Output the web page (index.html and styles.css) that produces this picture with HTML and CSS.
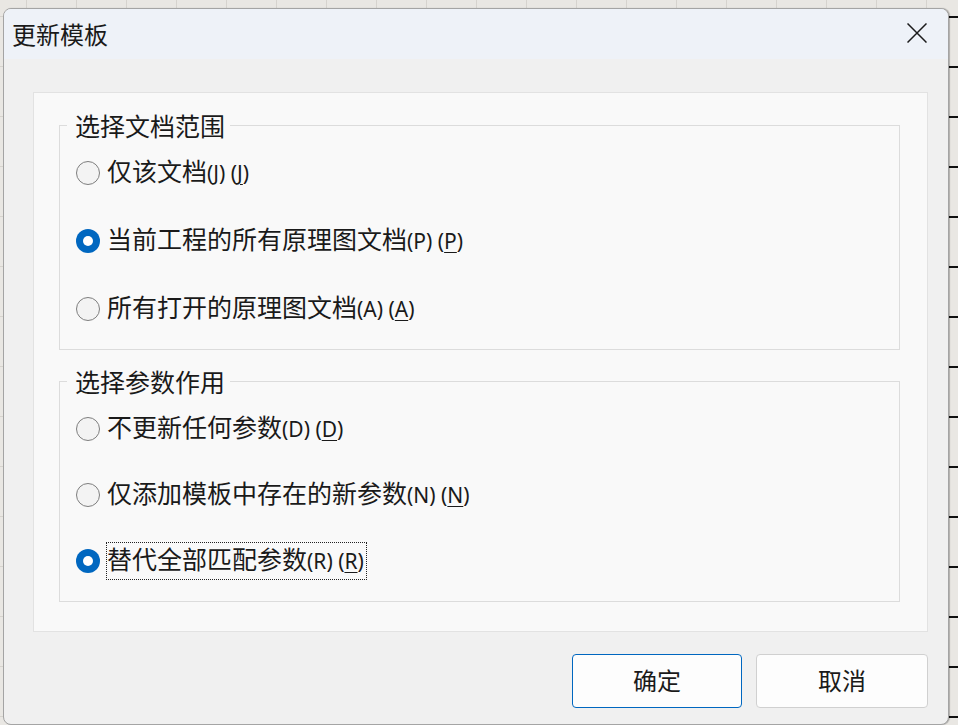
FILE: index.html
```html
<!DOCTYPE html>
<html lang="zh-CN">
<head>
<meta charset="utf-8">
<title>更新模板</title>
<link rel="stylesheet" href="styles.css">
</head>
<body>
<div class="dialog">
  <div class="titlebar">
    <span class="title">更新模板</span>
    <span class="close" aria-label="关闭">
      <svg width="20" height="20" viewBox="0 0 20 20"><path d="M0.5 0.5 L19.5 19.5 M19.5 0.5 L0.5 19.5" stroke="#1b1b1b" stroke-width="1.5" fill="none"/></svg>
    </span>
  </div>
  <div class="content">
    <div class="panel">
      <fieldset class="group g1">
        <legend>选择文档范围</legend>
        <div class="options">
          <label class="option"><span class="radio"></span><span class="text">仅该文档<span class="key">(J) (<u>J</u>)</span></span></label>
          <label class="option"><span class="radio checked"></span><span class="text">当前工程的所有原理图文档<span class="key">(P) (<u>P</u>)</span></span></label>
          <label class="option"><span class="radio"></span><span class="text">所有打开的原理图文档<span class="key">(A) (<u>A</u>)</span></span></label>
        </div>
      </fieldset>
      <fieldset class="group g2">
        <legend>选择参数作用</legend>
        <div class="options">
          <label class="option"><span class="radio"></span><span class="text">不更新任何参数<span class="key">(D) (<u>D</u>)</span></span></label>
          <label class="option"><span class="radio"></span><span class="text">仅添加模板中存在的新参数<span class="key">(N) (<u>N</u>)</span></span></label>
          <label class="option"><span class="radio checked"></span><span class="text focus">替代全部匹配参数<span class="key">(R) (<u>R</u>)</span></span></label>
        </div>
      </fieldset>
    </div>
    <div class="buttons">
      <button class="btn primary">确定</button>
      <button class="btn cancel">取消</button>
    </div>
  </div>
</div>
</body>
</html>
```

FILE: styles.css
```css
html, body {
  margin: 0;
  padding: 0;
}

body {
  width: 958px;
  height: 725px;
  overflow: hidden;
  box-sizing: border-box;
  padding: 8px 0 0 3px;
  font-family: "Noto Sans CJK SC", "Noto Sans", sans-serif;
  color: #1a1a1a;
  background-color: #e9e7e3;
  background-image:
    linear-gradient(to bottom, #111 2px, transparent 2px),
    linear-gradient(to right, #d6d3ce 1px, transparent 1px),
    linear-gradient(to bottom, #d6d3ce 1px, transparent 1px);
  background-size: 10px 50px, 50px 50px, 50px 50px;
  background-position: 949px 16px, 26px 0, 0 16px;
  background-repeat: repeat-y, repeat, repeat;
}

.dialog {
  width: 946px;
  height: 717px;
  box-sizing: border-box;
  border: 1px solid #a4a4a4;
  border-radius: 8px;
  background: #f0f0f0;
  overflow: hidden;
  display: flex;
  flex-direction: column;
  box-shadow: 1px 0 1px rgba(0, 0, 0, 0.25);
}

.titlebar {
  height: 50px;
  flex: none;
  background: #eef2f8;
  display: flex;
  align-items: center;
  justify-content: space-between;
  padding: 0 21px 0 8px;
}

.title {
  font-size: 24px;
  line-height: 30px;
}

.close {
  display: flex;
  width: 20px;
  height: 20px;
  margin-top: -3px;
}

.content {
  padding: 33px 20px 0 29px;
}

.panel {
  border: 1px solid #e2e2e2;
  background: #f9f9f9;
  padding: 17px 27px 29px 25px;
}

.group {
  margin: 0;
  border: 1px solid #dcdcdc;
  padding: 0 0 0 7px;
  min-width: 0;
}

.group + .group {
  margin-top: 16px;
}

.group legend {
  font-size: 25px;
  line-height: 30px;
  padding: 0 5px 0 8px;
}

.g1 {
  padding-top: 16px;
  padding-bottom: 23px;
}

.g2 {
  padding-top: 16px;
  padding-bottom: 23px;
}

.options {
  display: flex;
  flex-direction: column;
  margin-left: 9px;
}

.g1 .options {
  gap: 34px;
}

.g2 .options {
  gap: 32px;
}

.option {
  display: flex;
  align-items: center;
  height: 34px;
}

.radio {
  width: 24px;
  height: 24px;
  box-sizing: border-box;
  border-radius: 50%;
  border: 1.5px solid #7e7e7e;
  background: #f3f3f3;
  flex: none;
  margin-right: 7px;
}

.radio.checked {
  border: none;
  background: #0067c0;
  display: flex;
  align-items: center;
  justify-content: center;
}

.radio.checked::after {
  content: "";
  width: 10px;
  height: 10px;
  border-radius: 50%;
  background: #ffffff;
}

.text {
  font-size: 25px;
  line-height: 30px;
  padding-bottom: 3px;
  white-space: nowrap;
}

.text.focus {
  outline: 1px dotted #222;
  outline-offset: 0;
  padding-right: 2px;
}

.key {
  font-family: "Noto Sans", sans-serif;
  font-size: 21px;
}

.key u {
  text-underline-offset: 3px;
  text-decoration-thickness: 1px;
}

.buttons {
  display: flex;
  justify-content: flex-end;
  gap: 14px;
  margin-top: 22px;
}

.btn {
  height: 54px;
  box-sizing: border-box;
  border-radius: 4px;
  background: #fdfdfd;
  border: 1px solid #d0d0d0;
  font-family: "Noto Sans CJK SC", sans-serif;
  font-size: 24px;
  color: #1a1a1a;
  padding: 0 0 4px;
}

.btn.primary {
  width: 170px;
  border-color: #0067c0;
}

.btn.cancel {
  width: 172px;
}
```
